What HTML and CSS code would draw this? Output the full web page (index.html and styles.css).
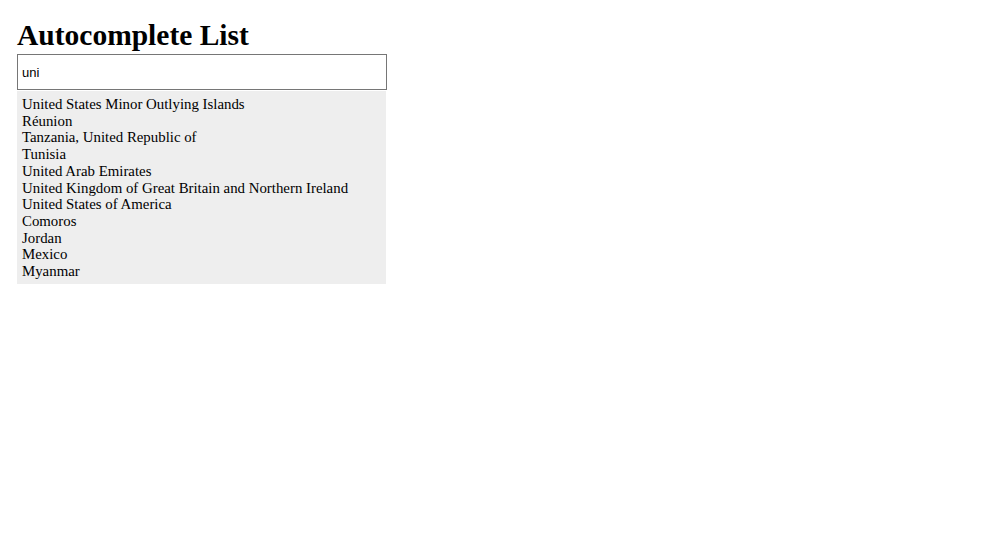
FILE: index.html
```html
<!DOCTYPE html>
<html>
<head>
<meta charset="utf-8">
<link rel="stylesheet" href="styles.css">
</head>
<body>
<div class="wrap">
  <h1 class="title">Autocomplete List</h1>
  <input class="search" type="text" value="uni">
  <ul class="list">
    <li>United States Minor Outlying Islands</li>
    <li>Réunion</li>
    <li>Tanzania, United Republic of</li>
    <li>Tunisia</li>
    <li>United Arab Emirates</li>
    <li>United Kingdom of Great Britain and Northern Ireland</li>
    <li>United States of America</li>
    <li>Comoros</li>
    <li>Jordan</li>
    <li>Mexico</li>
    <li>Myanmar</li>
  </ul>
</div>
</body>
</html>
```
FILE: styles.css
```css
html, body {
  margin: 0;
  padding: 0;
  background: #fff;
}
body {
  font-family: "Liberation Serif", "Times New Roman", serif;
  color: #000;
}
.wrap {
  padding: 17px 0 0 17px;
  width: 370px;
}
.title {
  font-size: 29.5px;
  font-weight: bold;
  line-height: 37px;
  margin: 0;
}
.search {
  display: block;
  box-sizing: border-box;
  width: 370px;
  height: 36px;
  margin: 0;
  padding: 0 4px;
  border: 1px solid #767676;
  font-family: "Liberation Sans", Arial, sans-serif;
  font-size: 13px;
  color: #000;
  outline: none;
}
.list {
  list-style: none;
  margin: 1px 0 0 0;
  padding: 5px 5px 4px 5px;
  width: 369px;
  box-sizing: border-box;
  background: #eeeeee;
  font-size: 14.85px;
  line-height: 16.7px;
}
```
